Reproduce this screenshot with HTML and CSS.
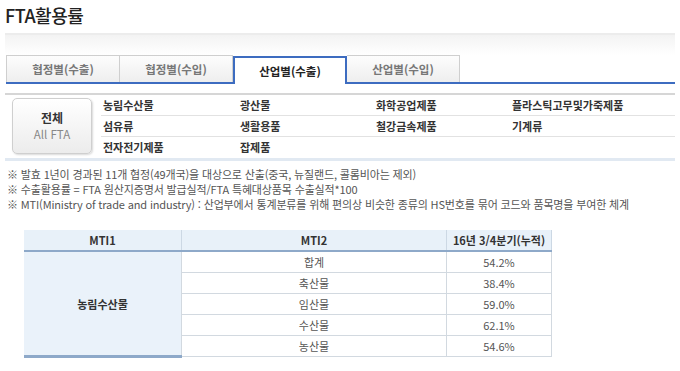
FILE: index.html
```html
<!DOCTYPE html>
<html lang="ko">
<head>
  <meta charset="UTF-8" />
  <meta name="viewport" content="width=device-width, initial-scale=1.0"/>
  <title>FTA활용률</title>
  <link rel="stylesheet" href="styles.css">
</head>
<body>

  <h1 class="page-title">FTA활용률</h1>
  <div class="title-line"></div>

  <ul class="tabs">
    <li class="tab">협정별(수출)</li>
    <li class="tab">협정별(수입)</li>
    <li class="tab active">산업별(수출)</li>
    <li class="tab">산업별(수입)</li>
  </ul>

  <div class="category">
    <div class="all-btn">
      <strong>전체</strong>
      <span>All FTA</span>
    </div>
    <ul class="category-list">
      <li>농림수산물</li>
      <li>광산물</li>
      <li>화학공업제품</li>
      <li>플라스틱고무및가죽제품</li>
      <li>섬유류</li>
      <li>생활용품</li>
      <li>철강금속제품</li>
      <li>기계류</li>
      <li class="last">전자전기제품</li>
      <li class="last">잡제품</li>
      <li class="last"></li>
      <li class="last"></li>
    </ul>
  </div>

  <ul class="notes">
    <li>※ 발효 1년이 경과된 11개 협정(49개국)을 대상으로 산출(중국, 뉴질랜드, 콜롬비아는 제외)</li>
    <li>※ 수출활용률 = FTA 원산지증명서 발급실적/FTA 특혜대상품목 수출실적*100</li>
    <li>※ MTI(Ministry of trade and industry) : 산업부에서 통계분류를 위해 편의상 비슷한 종류의 HS번호를 묶어 코드와 품목명을 부여한 체계</li>
  </ul>

  <table class="stat-table">
    <thead>
      <tr>
        <th class="col-mti1">MTI1</th>
        <th class="col-mti2">MTI2</th>
        <th class="col-rate">16년 3/4분기(누적)</th>
      </tr>
    </thead>
    <tbody>
      <tr>
        <td class="group" rowspan="5">농림수산물</td>
        <td>합계</td>
        <td>54.2%</td>
      </tr>
      <tr><td>축산물</td><td>38.4%</td></tr>
      <tr><td>임산물</td><td>59.0%</td></tr>
      <tr><td>수산물</td><td>62.1%</td></tr>
      <tr><td>농산물</td><td>54.6%</td></tr>
    </tbody>
  </table>

</body>
</html>
```

FILE: styles.css
```css
body {
  margin: 0;
  padding: 0 5px;
  font-family: "Noto Sans CJK KR", "Noto Sans", sans-serif;
  background-color: #fff;
  color: #333;
}

ul {
  list-style: none;
  margin: 0;
  padding: 0;
}

.page-title {
  margin: 0;
  height: 33px;
  line-height: 30px;
  font-size: 18px;
  font-weight: 500;
  color: #222;
  letter-spacing: -0.5px;
}

.title-line {
  height: 20px;
  border-top: 2px solid #ececec;
  background: linear-gradient(#f3f3f3, #fff);
}

.tabs {
  display: flex;
  align-items: flex-end;
  height: 27px;
  margin-left: 1px;
  border-bottom: 2px solid #3d6cc0;
}

.tab {
  width: 112px;
  height: 26px;
  line-height: 26px;
  text-align: center;
  font-size: 11.5px;
  font-weight: 700;
  color: #777;
  border-top: 1px solid #cfcfcf;
  border-right: 1px solid #cfcfcf;
  background: linear-gradient(#fdfdfd, #eeeeee);
}

.tab:first-child {
  border-left: 1px solid #cfcfcf;
}

.tab.active {
  width: 110px;
  height: 26px;
  margin-bottom: -2px;
  color: #222;
  background: #fff;
  border: 2px solid #3d6cc0;
  border-bottom: none;
}

.category {
  display: flex;
  margin-top: 9px;
  border-top: 2px solid #d6d6d6;
  border-bottom: 3px solid #e1e9f2;
}

.all-btn {
  flex: none;
  display: flex;
  flex-direction: column;
  align-items: center;
  justify-content: center;
  width: 78px;
  height: 54px;
  margin: 3px 9px 0 7px;
  border: 1px solid #cfcfcf;
  border-radius: 5px;
  background: linear-gradient(#ffffff, #ececec);
  box-shadow: 1px 1px 2px rgba(0, 0, 0, 0.15);
  line-height: 17px;
}

.all-btn strong {
  font-size: 12px;
  color: #333;
}

.all-btn span {
  font-size: 11.5px;
  color: #888;
}

.category-list {
  flex: 1;
  display: flex;
  flex-wrap: wrap;
}

.category-list li {
  box-sizing: border-box;
  width: 137px;
  height: 21px;
  line-height: 20px;
  padding-left: 2px;
  font-size: 11px;
  font-weight: 700;
  color: #333;
  white-space: nowrap;
  border-bottom: 1px solid #e2e2e2;
}

.category-list li:nth-child(4n+2),
.category-list li:nth-child(4n+3) {
  width: 136px;
}

.category-list li:nth-child(4n) {
  width: auto;
  flex: 1;
}

.category-list li.last {
  border-bottom: none;
}

.notes {
  margin: 6px 0 0 2px;
}

.notes li {
  line-height: 15px;
  font-size: 11px;
  color: #555;
  white-space: nowrap;
  letter-spacing: -0.15px;
}

.stat-table {
  margin: 18px 0 0 19px;
  width: 528px;
  border-collapse: collapse;
  font-size: 11px;
}

.stat-table th {
  height: 20px;
  padding: 0;
  background: #e8f1f9;
  color: #333;
  font-weight: 700;
  border: 1px solid #ccd8e4;
  border-top: none;
  border-bottom: 2px solid #8ea9c9;
}

.stat-table th:first-child {
  border-left: none;
}

.col-mti1 { width: 157px; }
.col-mti2 { width: 264px; }

.stat-table td {
  height: 20px;
  padding: 0;
  text-align: center;
  color: #555;
  border: 1px solid #d2d9e0;
}

.stat-table td.group {
  background: #eaf2fa;
  color: #333;
  font-weight: 700;
  border-left: none;
  border-bottom: 3px solid #8ea9c9;
}
```
